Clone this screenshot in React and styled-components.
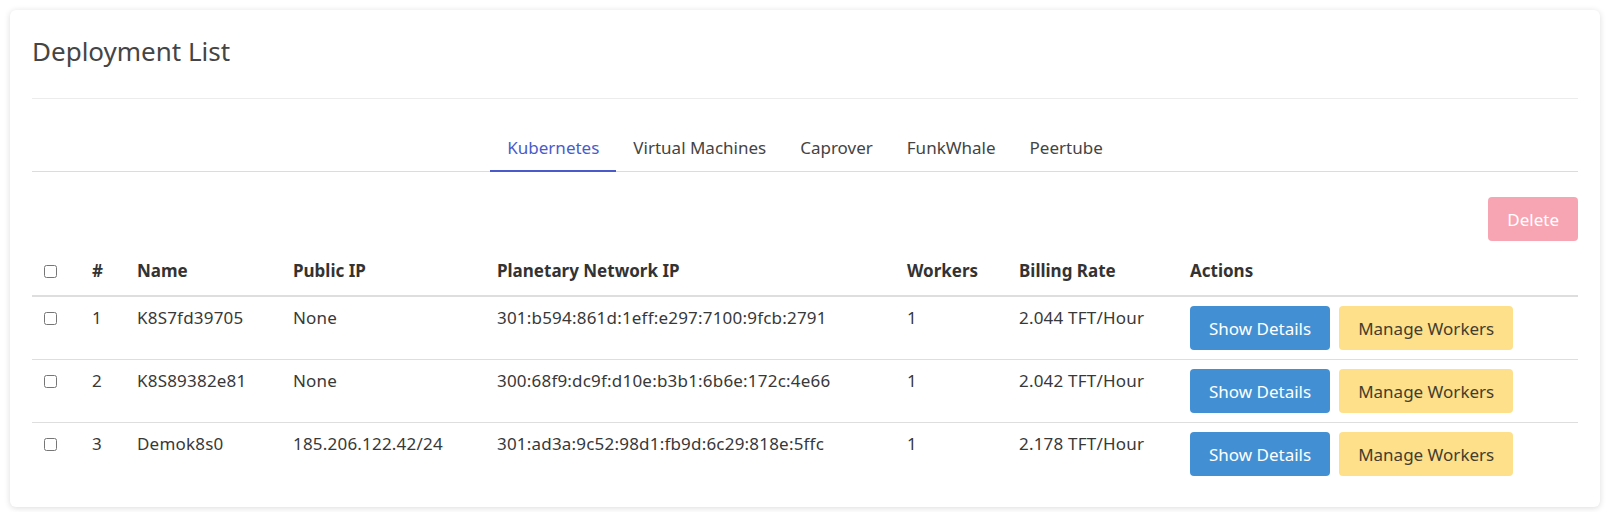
import React, { useState } from 'react';
import styled, { createGlobalStyle } from 'styled-components';

const GlobalStyle = createGlobalStyle`
  body {
    margin: 0;
    background: #ffffff;
    font-family: "Noto Sans", "Open Sans", sans-serif;
    color: #333;
  }
`;

const Page = styled.div`
  padding: 10px;
`;

const Card = styled.div`
  background: #fff;
  border-radius: 6px;
  box-shadow: 0 1px 6px rgba(0, 0, 0, 0.14);
  padding: 22px 22px 22px;
`;

const Header = styled.div`
  padding-top: 2px;
  padding-bottom: 30px;
  border-bottom: 1px solid #ececec;
`;

const Title = styled.h2`
  margin: 0;
  font-size: 26px;
  line-height: 34px;
  font-weight: 400;
  color: #454545;
`;

const Tabs = styled.div`
  margin-top: 25px;
  display: flex;
  justify-content: center;
  border-bottom: 1px solid #dcdcdc;
`;

const Tab = styled.button`
  height: 48px;
  padding: 0 17px;
  margin-bottom: -1px;
  border: none;
  border-bottom: 2px solid ${(p) => (p.active ? '#4a5bc9' : 'transparent')};
  background: none;
  font-family: inherit;
  font-size: 17px;
  color: ${(p) => (p.active ? '#4a5bc9' : '#444')};
  cursor: pointer;
`;

const Toolbar = styled.div`
  display: flex;
  justify-content: flex-end;
  margin-top: 25px;
  margin-bottom: 6px;
`;

const Button = styled.button`
  height: 44px;
  padding: 0 19px;
  border: none;
  border-radius: 4px;
  font-family: inherit;
  font-size: 17px;
  cursor: pointer;
  background: ${(p) => (p.variant === 'primary' ? '#4290d3' : p.variant === 'warning' ? '#fedf8a' : '#f8a5b3')};
  color: ${(p) => (p.variant === 'warning' ? '#433d2e' : '#fff')};
`;

const Table = styled.table`
  width: 100%;
  border-collapse: collapse;
  table-layout: fixed;
  font-size: 17px;
`;

const Th = styled.th`
  text-align: left;
  font-weight: 700;
  line-height: 24px;
  padding: 12px;
  color: #333;
  border-bottom: 2px solid #dedede;
`;

const Td = styled.td`
  text-align: left;
  vertical-align: top;
  line-height: 24px;
  padding: 9px 12px 9px;
  color: #383838;
  letter-spacing: 0.2px;
  border-top: ${(p) => (p.first ? 'none' : '1px solid #dedede')};
`;

const Check = styled.input`
  margin: 0;
  width: 13px;
  height: 13px;
  vertical-align: middle;
  position: relative;
  top: -1px;
`;

const Actions = styled.div`
  display: flex;
  gap: 9px;
  letter-spacing: 0;
`;

const columns = [
  { key: 'check', width: 48 },
  { key: '#', width: 45 },
  { key: 'Name', width: 156 },
  { key: 'Public IP', width: 204 },
  { key: 'Planetary Network IP', width: 410 },
  { key: 'Workers', width: 112 },
  { key: 'Billing Rate', width: 171 },
  { key: 'Actions', width: 400 },
];

const rows = [
  { id: 1, name: 'K8S7fd39705', publicIp: 'None', planetary: '301:b594:861d:1eff:e297:7100:9fcb:2791', workers: 1, rate: '2.044 TFT/Hour' },
  { id: 2, name: 'K8S89382e81', publicIp: 'None', planetary: '300:68f9:dc9f:d10e:b3b1:6b6e:172c:4e66', workers: 1, rate: '2.042 TFT/Hour' },
  { id: 3, name: 'Demok8s0', publicIp: '185.206.122.42/24', planetary: '301:ad3a:9c52:98d1:fb9d:6c29:818e:5ffc', workers: 1, rate: '2.178 TFT/Hour' },
];

const tabs = ['Kubernetes', 'Virtual Machines', 'Caprover', 'FunkWhale', 'Peertube'];

export default function App() {
  const [active, setActive] = useState('Kubernetes');

  return (
    <Page>
      <GlobalStyle />
      <Card>
        <Header>
          <Title>Deployment List</Title>
        </Header>
        <Tabs>
          {tabs.map((t) => (
            <Tab key={t} active={t === active} onClick={() => setActive(t)}>
              {t}
            </Tab>
          ))}
        </Tabs>
        <Toolbar>
          <Button>Delete</Button>
        </Toolbar>
        <Table>
          <colgroup>
            {columns.map((c) => (
              <col key={c.key} style={{ width: c.width }} />
            ))}
          </colgroup>
          <thead>
            <tr>
              <Th><Check type="checkbox" /></Th>
              <Th>#</Th>
              <Th>Name</Th>
              <Th>Public IP</Th>
              <Th>Planetary Network IP</Th>
              <Th>Workers</Th>
              <Th>Billing Rate</Th>
              <Th>Actions</Th>
            </tr>
          </thead>
          <tbody>
            {rows.map((r, i) => (
              <tr key={r.id}>
                <Td first={i === 0}><Check type="checkbox" /></Td>
                <Td first={i === 0}>{r.id}</Td>
                <Td first={i === 0}>{r.name}</Td>
                <Td first={i === 0}>{r.publicIp}</Td>
                <Td first={i === 0}>{r.planetary}</Td>
                <Td first={i === 0}>{r.workers}</Td>
                <Td first={i === 0}>{r.rate}</Td>
                <Td first={i === 0}>
                  <Actions>
                    <Button variant="primary">Show Details</Button>
                    <Button variant="warning">Manage Workers</Button>
                  </Actions>
                </Td>
              </tr>
            ))}
          </tbody>
        </Table>
      </Card>
    </Page>
  );
}
